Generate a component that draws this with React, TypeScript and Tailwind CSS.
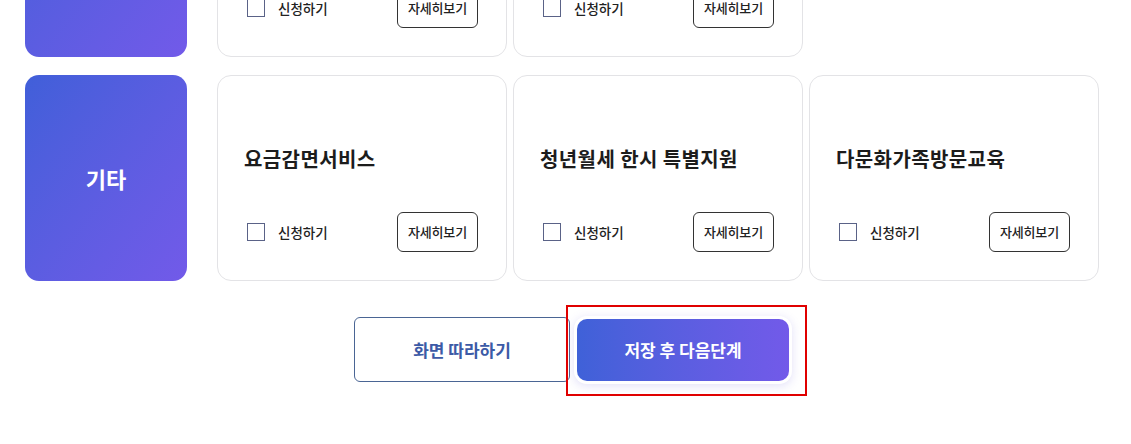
import React from 'react';

type Service = { title: string };

const font = { fontFamily: '"Noto Sans CJK KR", "Noto Sans", sans-serif' };

const ServiceCard: React.FC<{ service: Service }> = ({ service }) => (
  <div className="flex h-[206px] w-[290px] flex-col rounded-[14px] border border-[#e3e3e6] bg-white pb-[28px] pl-[26px] pr-[28px]">
    <div className="mt-[69px] h-[28px] text-[20px] font-bold leading-[28px] tracking-[0.4px] text-[#1c1c1c]">
      {service.title}
    </div>
    <div className="mt-auto flex h-10 items-center justify-between">
      <label className="flex items-center">
        <span className="ml-[3px] h-[18px] w-[18px] border border-[#5a6287] bg-white" />
        <span className="ml-[13px] text-[13.5px] font-medium text-[#222]">신청하기</span>
      </label>
      <button className="h-10 w-[81px] rounded-[6px] border border-[#333] bg-white text-[13px] font-medium tracking-[-0.2px] text-[#222]">
        자세히보기
      </button>
    </div>
  </div>
);

const CategoryRow: React.FC<{ label: string; services: Service[] }> = ({ label, services }) => (
  <div className="flex">
    <div className="flex h-[206px] w-[162px] shrink-0 items-center justify-center rounded-[14px] bg-gradient-to-br from-[#405fd9] to-[#725ae9]">
      <span className="text-[22px] font-bold text-white">{label}</span>
    </div>
    <div className="ml-[30px] flex gap-[6px]">
      {services.map((s) => (
        <ServiceCard key={s.title} service={s} />
      ))}
    </div>
  </div>
);

export default function App() {
  return (
    <div className="h-[444px] w-[1131px] overflow-hidden bg-white" style={font}>
      <div className="mt-[-149px] flex flex-col gap-[18px] pl-[25px]">
        <CategoryRow
          label="교육"
          services={[{ title: '평생교육바우처' }, { title: '국민내일배움카드' }]}
        />
        <CategoryRow
          label="기타"
          services={[
            { title: '요금감면서비스' },
            { title: '청년월세 한시 특별지원' },
            { title: '다문화가족방문교육' },
          ]}
        />
      </div>

      <div className="mt-[36px] flex pl-[354px]">
        <button className="h-[65px] w-[216px] rounded-[6px] border border-[#4a6594] bg-white text-[17px] font-bold text-[#3c5aa6]">
          화면 따라하기
        </button>
        <div className="relative ml-[7px] mt-[2px]">
          <button className="h-[62px] w-[212px] rounded-[10px] bg-gradient-to-r from-[#3f61d8] to-[#725ae9] text-[17px] font-bold text-white shadow-[0_0_0_3px_#ffffff,0_2px_8px_4px_rgba(120,110,220,0.18)]">
            저장 후 다음단계
          </button>
          <div className="pointer-events-none absolute left-[-11px] top-[-14px] h-[91px] w-[241px] border-2 border-[#e00000]" />
        </div>
      </div>
    </div>
  );
}
